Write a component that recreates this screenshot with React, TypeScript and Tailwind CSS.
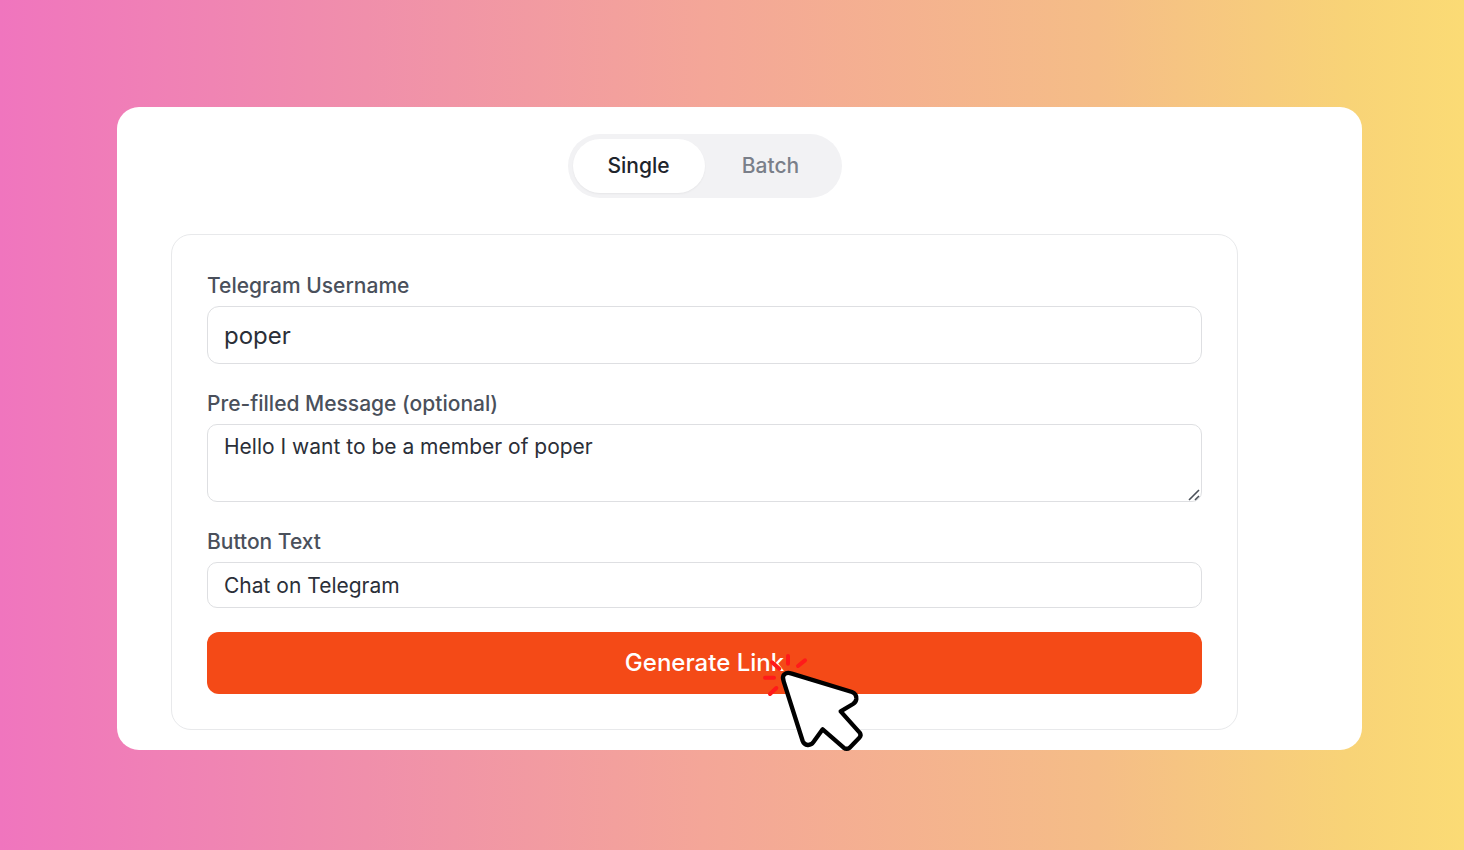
import React, { useState } from 'react';

const label = 'block text-[21px] leading-8 font-medium text-[#4a505b]';
const field = 'mt-1 block w-full border border-[#dedfe2] bg-white px-4 text-[#2b2f38] outline-none';

const ClickPointer = () => (
  <svg
    viewBox="0 0 450 390"
    fill="none"
    strokeLinejoin="round"
    aria-hidden="true"
    className="pointer-events-none absolute -top-0.5 left-1/2 ml-[35px] h-[130px] w-[150px]"
  >
    <g stroke="#ff1a1a" strokeWidth="12" strokeLinecap="round">
      <path d="M144 78V101" />
      <path d="M195 91L174 108" />
      <path d="M96 97L118 116" />
      <path d="M75 143H102" />
      <path d="M109 174L90 192" />
    </g>
    <path
      d="M153 130L336 186Q350 191 349 207Q348 216 339 222L302 244L359 308Q365 316 358 323L329 353Q320 360 311 353L248 298L222 334Q214 346 203 345Q192 344 188 333L131 154Q126 140 133 133Q141 126 153 130Z"
      fill="#fff"
      stroke="#000"
      strokeWidth="13"
    />
  </svg>
);

const App = () => {
  const [mode, setMode] = useState('single');
  const [username, setUsername] = useState('poper');
  const [message, setMessage] = useState('Hello I want to be a member of poper');
  const [buttonText, setButtonText] = useState('Chat on Telegram');

  const tab = 'flex-1 rounded-full text-[21px] font-medium ';
  const active = 'bg-white text-[#20242c] shadow-xs';
  const inactive = 'text-[#7a7f89]';

  return (
    <div className="min-h-screen bg-[linear-gradient(90deg,#f075be_0%,#f08fab_25%,#f4a698_48%,#f5bd87_75%,#f8d377_92%,#fbdb75_100%)] pt-[107px] pr-[102px] pb-[100px] pl-[117px] font-['Inter',sans-serif]">
      <main className="rounded-[22px] bg-white pt-[27px] pr-[124px] pb-5 pl-[54px]">
        <div className="mx-auto flex h-16 w-[274px] rounded-full bg-[#f2f2f4] p-[5px]">
          <button type="button" onClick={() => setMode('single')} className={tab + (mode === 'single' ? active : inactive)}>
            Single
          </button>
          <button type="button" onClick={() => setMode('batch')} className={tab + (mode === 'batch' ? active : inactive)}>
            Batch
          </button>
        </div>

        <form
          onSubmit={(e) => e.preventDefault()}
          className="mt-9 flex flex-col gap-6 rounded-[20px] border border-[#e8e9eb] p-[35px]"
        >
          <div>
            <label htmlFor="username" className={label}>Telegram Username</label>
            <input
              id="username"
              value={username}
              onChange={(e) => setUsername(e.target.value)}
              className={`${field} h-[58px] rounded-xl text-2xl`}
            />
          </div>
          <div>
            <label htmlFor="message" className={label}>Pre-filled Message (optional)</label>
            <div className="relative">
              <textarea
                id="message"
                value={message}
                onChange={(e) => setMessage(e.target.value)}
                className={`${field} h-[78px] resize-none rounded-[10px] py-2 text-[21px] leading-7`}
              />
              <svg viewBox="0 0 12 12" aria-hidden="true" className="pointer-events-none absolute right-0.5 bottom-px size-3">
                <path d="M1 11L11 1M7 11L11 7" stroke="#4b5059" strokeWidth="1.6" />
              </svg>
            </div>
          </div>
          <div>
            <label htmlFor="button-text" className={label}>Button Text</label>
            <input
              id="button-text"
              value={buttonText}
              onChange={(e) => setButtonText(e.target.value)}
              className={`${field} h-[46px] rounded-[10px] text-[21px]`}
            />
          </div>
          <div className="relative">
            <button type="submit" className="block h-[62px] w-full rounded-xl bg-[#f44a17] text-2xl font-medium text-white">
              Generate Link
            </button>
            <ClickPointer />
          </div>
        </form>
      </main>
    </div>
  );
};

export default App;
